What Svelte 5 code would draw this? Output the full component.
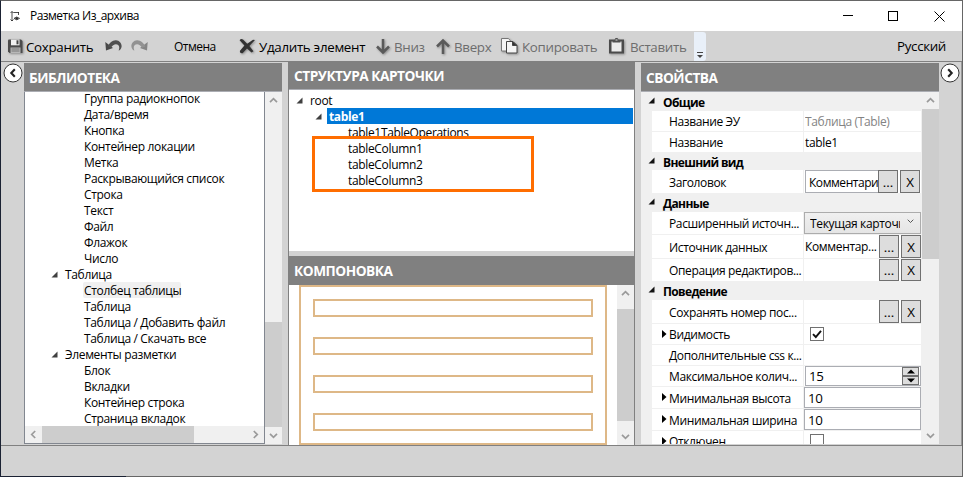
<script>
  const library = [
    { t: 'Группа радиокнопок' },
    { t: 'Дата/время' },
    { t: 'Кнопка' },
    { t: 'Контейнер локации' },
    { t: 'Метка' },
    { t: 'Раскрывающийся список' },
    { t: 'Строка' },
    { t: 'Текст' },
    { t: 'Файл' },
    { t: 'Флажок' },
    { t: 'Число' },
    { t: 'Таблица', group: true },
    { t: 'Столбец таблицы', picked: true },
    { t: 'Таблица' },
    { t: 'Таблица / Добавить файл' },
    { t: 'Таблица / Скачать все' },
    { t: 'Элементы разметки', group: true },
    { t: 'Блок' },
    { t: 'Вкладки' },
    { t: 'Контейнер строка' },
    { t: 'Страница вкладок' }
  ];
  const columns = ['table1TableOperations', 'tableColumn1', 'tableColumn2', 'tableColumn3'];
  const groups = [
    { name: 'Общие', h: 19, rows: [
      { n: 'Название ЭУ', h: 21, kind: 'muted', v: 'Таблица (Table)' },
      { n: 'Название', h: 21, kind: 'text', v: 'table1' }
    ] },
    { name: 'Внешний вид', h: 17, rows: [
      { n: 'Заголовок', h: 24, kind: 'boxed', v: 'Комментари' }
    ] },
    { name: 'Данные', h: 18, rows: [
      { n: 'Расширенный источн...', h: 23, kind: 'select', v: 'Текущая карточка' },
      { n: 'Источник данных', h: 24, kind: 'pick', v: 'Комментар...' },
      { n: 'Операция редактиров...', h: 23, kind: 'pick', v: '' }
    ] },
    { name: 'Поведение', h: 18, rows: [
      { n: 'Сохранять номер пос...', h: 24, kind: 'pick', v: '' },
      { n: 'Видимость', h: 21, kind: 'check', v: true, sub: true },
      { n: 'Дополнительные css к...', h: 21, kind: 'text', v: '' },
      { n: 'Максимальное колич...', h: 21, kind: 'spin', v: '15' },
      { n: 'Минимальная высота', h: 22, kind: 'input', v: '10', sub: true },
      { n: 'Минимальная ширина', h: 22, kind: 'input', v: '10', sub: true },
      { n: 'Отключен', h: 21, kind: 'check', v: false, sub: true }
    ] }
  ];
</script>

{#snippet chev(dir)}
  <svg class="chev" width="9" height="9" viewBox="0 0 9 9">
    <path
      d={{ up: 'M1 6.2 4.5 2.7 8 6.2', down: 'M1 2.8 4.5 6.3 8 2.8', left: 'M6.2 1 2.7 4.5 6.2 8', right: 'M2.8 1 6.3 4.5 2.8 8' }[dir]}
      fill="none" stroke="#9a9a9a" stroke-width="1.7" />
  </svg>
{/snippet}

{#snippet tri()}
  <svg class="tri" width="7" height="7" viewBox="0 0 7 7"><path d="M6.5.5v6h-6z" /></svg>
{/snippet}

<div class="window">
  <div class="title">
    <svg class="app" width="10" height="11" viewBox="0 0 10 11" fill="none" stroke="#222">
      <path d="M2 .5v9.500M.5 2 2 .5 3.500 2M.5 8.500 2 10l1.500-1.500M3.500 1.500h5.500M8.500 1v3" stroke-width=".8" />
      <path d="M4 7.400Q6.700 4.600 9.500 7.400 6.700 10.200 4 7.400z" stroke-width=".8" /><circle cx="6.700" cy="7.400" r="1.200" fill="#222" stroke="none" />
    </svg>
    <span class="name">Разметка Из_архива</span>
    <svg class="winbtns" width="102" height="11" viewBox="0 0 102 11" fill="none" stroke="#000">
      <path d="M0 4.500h10M91.500.5l10 10M101.500.5l-10 10" /><rect x="45.500" y=".5" width="9" height="9" />
    </svg>
  </div>

  <div class="toolbar">
    <svg class="save" width="17" height="17" viewBox="0 0 17 17">
      <path d="M1 2.500Q1 1.500 2 1.500H14l1.500 1.500v12H2.500L1 13.500z" fill="#4b4b4b" />
      <path d="M4 1.500h8.500v5.800H4z" fill="#f2f2f2" /><path d="M9.500 2.300h2v4h-2z" fill="#444" />
      <path d="M3.500 9.500h10V15h-10z" fill="#b8b8b8" /><path d="M4.500 11h8M4.500 13h8" stroke="#777" />
    </svg>
    <span class="big t-save">Сохранить</span>
    <svg class="undo" width="17" height="13" viewBox="0 0 17 13">
      <path d="M.3 3 1 11.600 8 9z" fill="#484848" /><path d="M2.600 7.600C4.500 3.200 7.500 1 11 1.200c4 .3 6.400 4 5.400 7.200-.4 1.500-1.400 2.600-2.800 3.200.8-2 1-4-.2-5.300-1.900-2-5.600-1-7.400 2.500z" fill="#505050" />
    </svg>
    <svg class="redo" width="17" height="13" viewBox="0 0 17 13">
      <path d="M16.700 3 16 11.600 9 9z" fill="#858585" /><path d="M14.400 7.600C12.500 3.200 9.500 1 6 1.200 2 1.500-.4 5.200.6 8.400c.4 1.500 1.400 2.600 2.800 3.200-.8-2-1-4 .2-5.300 1.900-2 5.600-1 7.400 2.500z" fill="#929292" />
    </svg>
    <span class="t-cancel">Отмена</span>
    <svg class="del" width="17" height="17" viewBox="0 0 17 17">
      <path d="M.6 2.200Q2 .2 4 1.600L8.200 5.800 14 1.800 16 2 10.400 8 14.500 13.300 12.500 14.600 8 10.400 3.600 15.200Q.8 15.800.8 13L5.400 7.600z" fill="#333" />
    </svg>
    <span class="big t-del">Удалить элемент</span>
    <svg class="down" width="16" height="17" viewBox="0 0 16 17"><path d="M8 1v13M2 8.500l6 6 6-6" fill="none" stroke="#5a5a5a" stroke-width="2.500" /></svg>
    <span class="big dim t-down">Вниз</span>
    <svg class="up" width="16" height="17" viewBox="0 0 16 17"><path d="M8 16V3M2 8.500l6-6 6 6" fill="none" stroke="#5a5a5a" stroke-width="2.500" /></svg>
    <span class="big dim t-up">Вверх</span>
    <svg class="copy" width="19" height="18" viewBox="0 0 19 18" stroke="#444" fill="#f4f4f4">
      <path d="M1.500 1.500h7l2.500 3v9.500H1.500z" stroke="#777" /><path d="M6.500 4.500H13l4 4v7.500H6.500z" /><path d="M12.500 4.500l4.500 4h-4.500z" fill="#333" />
    </svg>
    <span class="big dim t-copy">Копировать</span>
    <svg class="paste" width="17" height="18" viewBox="0 0 17 18">
      <path d="M1 2.500h15v14H1z" fill="#4b4b4b" /><path d="M3.500 4.500h10v10h-10z" fill="#ececec" /><path d="M4.500 5.500V3h2l1-2h2l1 2h2v2.500z" fill="#505050" /><path d="M7.500 2.500h2v1h-2z" fill="#ddd" />
    </svg>
    <span class="big dim t-paste">Вставить</span>
    <span class="grip"><svg width="6" height="7" viewBox="0 0 6 7"><path d="M0 .5h6" stroke="#444" /><path d="M0 3h6L3 6z" fill="#444" /></svg></span>
    <span class="lang">Русский</span>
  </div>

  <div class="main">
    <div class="rail">
      <svg width="20" height="20" viewBox="0 0 20 20"><circle cx="10" cy="10" r="9" fill="#fff" stroke="#333" /><path d="M11.800 6.300 8.300 10l3.500 3.700" fill="none" stroke="#222" stroke-width="2.100" /></svg>
    </div>

    <section class="lib">
      <h2>БИБЛИОТЕКА</h2>
      <div class="libbody">
        <div class="libleft">
          <div class="tree">
            {#each library as item}
              <div class="node" class:group={item.group}>
                {#if item.group}{@render tri()}{/if}
                <span class:picked={item.picked}>{item.t}</span>
              </div>
            {/each}
          </div>
          <div class="hscroll">
            <i>{@render chev('left')}</i><b></b><i class="end">{@render chev('right')}</i>
          </div>
        </div>
        <div class="vscroll"><i>{@render chev('up')}</i><b></b><i class="end">{@render chev('down')}</i></div>
      </div>
    </section>

    <section class="center">
      <h2>СТРУКТУРА КАРТОЧКИ</h2>
      <div class="structure">
        <div class="node root">{@render tri()}<span>root</span></div>
        <div class="node tbl">{@render tri()}<span class="selected">table1</span></div>
        {#each columns as c}<div class="node leaf"><span>{c}</span></div>{/each}
        <div class="marker"></div>
      </div>
      <h2 class="second">КОМПОНОВКА</h2>
      <div class="layout">
        <div class="frame"><div></div><div></div><div></div><div></div></div>
        <div class="vscroll"><i>{@render chev('up')}</i><b></b><i class="end">{@render chev('down')}</i></div>
      </div>
    </section>

    <section class="props">
      <h2>СВОЙСТВА</h2>
      <div class="propbody">
        <div class="grid">
          {#each groups as g}
            <div class="cat" style="height:{g.h}px">{@render tri()}<span>{g.name}</span></div>
            {#each g.rows as r}
              <div class="row" style="height:{r.h}px">
                <div class="key">
                  {#if r.sub}<svg class="sub" width="5" height="8" viewBox="0 0 5 8"><path d="M0 0 4.500 4 0 8z" /></svg>{/if}
                  <span>{r.n}</span>
                </div>
                <div class="val {r.kind}">
                  {#if r.kind === 'check'}
                    <span class="cb">{#if r.v}<svg width="12" height="12" viewBox="0 0 12 12"><path d="M2 6.200 4.800 9 10 2.800" fill="none" stroke="#111" stroke-width="1.900" /></svg>{/if}</span>
                  {:else if r.kind === 'select'}
                    <span class="selbox"><span class="clip">{r.v}</span><svg width="7" height="5" viewBox="0 0 7 5"><path d="M.7.7 3.500 3.500 6.300.7" fill="none" stroke="#555" /></svg></span>
                  {:else if r.kind === 'pick' || r.kind === 'boxed'}
                    <span class="v">{r.v}</span><button>...</button><button class="x">X</button>
                  {:else if r.kind === 'spin'}
                    <span class="field"><span>{r.v}</span><span class="spins"><i><svg width="8" height="5" viewBox="0 0 8 5"><path d="M0 4.500h8L4 .5z" /></svg></i><i><svg width="8" height="5" viewBox="0 0 8 5"><path d="M0 .5h8L4 4.500z" /></svg></i></span></span>
                  {:else if r.kind === 'input'}
                    <span class="field"><span>{r.v}</span></span>
                  {:else}
                    <span class="v">{r.v}</span>
                  {/if}
                </div>
              </div>
            {/each}
          {/each}
        </div>
        <div class="vscroll"><i>{@render chev('up')}</i><b></b><i class="end">{@render chev('down')}</i></div>
      </div>
    </section>

    <div class="rail right">
      <svg width="20" height="20" viewBox="0 0 20 20"><circle cx="10" cy="10" r="9" fill="#fff" stroke="#333" /><path d="M8.200 6.300 11.700 10l-3.500 3.700" fill="none" stroke="#222" stroke-width="2.100" /></svg>
    </div>
  </div>
  <div class="status"></div>
  <div class="edge"></div>
</div>

<style>
  .window, .window * { box-sizing: border-box; }
  .window {
    width: 963px; height: 477px; overflow: hidden; display: flex; flex-direction: column;
    background: #d3d3d3; border: 1px solid #666; border-left-color: #1b2233; border-bottom: 0;
    font: 12px/16px "Open Sans", "Noto Sans", sans-serif; letter-spacing: -0.34px; color: #000; white-space: nowrap;
  }
  svg { display: block; flex: none; }
  i { font-style: normal; }
  .title { height: 30px; background: #fff; display: flex; align-items: center; padding-left: 9px; flex: none; }
  .name { margin-left: 10px; letter-spacing: -0.53px; }
  .winbtns { margin-left: auto; margin-right: 17px; }
  .toolbar { height: 30px; display: flex; align-items: center; padding-left: 6px; flex: none; }
  .big { font-size: 13.33px; height: 17px; line-height: 19px; letter-spacing: -0.3px; }
  .dim { color: #6d6d6d; }
  .save, .del, .up, .down, .copy, .paste { filter: drop-shadow(1px 1px 1px #0005); }
  .t-save { width: 79px; margin-left: 2px; }
  .undo { margin-bottom: 2px; }
  .redo { margin-left: 9px; margin-bottom: 2px; }
  .t-cancel { margin-left: 26px; width: 65px; padding-top: 2px; letter-spacing: -0.5px; }
  .t-del { width: 116px; margin-left: 3px; }
  .t-down { width: 41px; margin-left: 3px; }
  .t-up { width: 46px; margin-left: 3px; }
  .t-copy { width: 86px; margin-left: 3px; }
  .t-paste { width: 64px; margin-left: 5px; }
  .grip { width: 12px; height: 29px; background: #e9f0f9; border-radius: 0 3px 3px 0; display: flex; align-items: flex-end; justify-content: center; padding-bottom: 2px; }
  .lang { margin-left: auto; margin-right: 16px; font-size: 13.33px; }

  .main { height: 385px; border-top: 1px solid #808080; border-bottom: 1px solid #808080; display: flex; flex: none; }
  .rail { width: 23px; padding: 1px 0 0 2px; }
  .rail.right { padding: 1px 0 0 1px; border-right: 1px solid #999; }
  h2 { margin: 0; height: 28px; background: #808080; color: #fff; font-size: 13.7px; font-weight: 700; line-height: 29px; padding-left: 5px; letter-spacing: -0.48px; flex: none; }

  .lib { width: 258px; display: flex; flex-direction: column; padding-top: 1px; margin-right: 6px; }
  .libbody { display: flex; height: 353px; border-top: 1px solid #abadb3; }
  .libleft { width: 241px; border: 1px solid #828790; border-top: 0; background: #fff; display: flex; flex-direction: column; }
  .tree { height: 334px; overflow: hidden; }
  .node { height: 16px; display: flex; align-items: center; padding-left: 59px; }
  .node span { height: 16px; line-height: 17.5px; }
  .tree .node:first-child { margin-top: -2px; }
  .tree .node.group { padding-left: 26px; }
  .node.group span { margin-left: 7px; }
  .picked { background: #f0f0f0; box-shadow: -1px 0 #f0f0f0; border-radius: 2px; }
  .hscroll { display: flex; height: 17px; background: #f0f0f0; }
  .hscroll i { width: 17px; display: grid; place-items: center; }
  .hscroll b { width: 152px; background: #cdcdcd; }
  .end { margin-left: auto; }
  .vscroll { width: 17px; background: #f0f0f0; display: flex; flex-direction: column; align-items: stretch; }
  .vscroll i { height: 17px; display: grid; place-items: center; }
  .vscroll b { background: #cdcdcd; }
  .vscroll .end { margin: auto 0 0; }
  .lib .vscroll b { height: 105px; margin-top: 213px; }
  .tri { fill: #404040; }

  .center { width: 347px; border-left: 1px solid #808080; border-right: 1px solid #808080; display: flex; flex-direction: column; margin-right: 6px; }
  .structure { height: 162px; background: #fff; border-top: 1px solid #abadb3; position: relative; padding-top: 2px; flex: none; }
  .center h2 { height: 27px; line-height: 28px; }
  .root { padding-left: 7px; }
  .root span { margin-left: 7px; }
  .tbl { padding-left: 26px; }
  .node .selected { margin-left: 5px; padding-left: 2px; flex: 1; line-height: 17px; margin-right: 1px; background: #0078d7; color: #fff; font-weight: 700; }
  .marker { position: absolute; left: 23px; top: 46px; width: 222px; height: 56px; border: 3px solid #ff6d00; }
  .center .second { height: 29px; margin-top: 5px; line-height: 30px; }
  .layout { height: 160px; background: #fff; display: flex; padding-left: 10px; justify-content: space-between; flex: none; }
  .frame { width: 308px; border: 2px solid #deb887; padding: 12px; display: flex; flex-direction: column; gap: 20px; }
  .frame div { height: 18px; border: 2px solid #deb887; flex: none; }
  .layout .vscroll b { height: 112px; margin-top: 7px; }

  .props { width: 298px; padding-top: 1px; }
  .propbody { display: flex; height: 353px; border-top: 1px solid #abadb3; background: #f0f0f0; }
  .grid { width: 281px; height: 352px; overflow: hidden; }
  .cat { display: flex; align-items: center; font-weight: 700; padding-left: 7px; letter-spacing: -0.65px; }
  .cat span { margin-left: 8px; padding-top: 2px; }
  .cat .tri { margin-bottom: 3px; fill: #111; }
  .row { margin: 0 1px 0 11px; display: flex; gap: 1px; border-bottom: 1px solid #f0f0f0; }
  .key { width: 151px; background: #fff; display: flex; align-items: center; padding: 2px 0 0 17px; position: relative; overflow: hidden; letter-spacing: -0.37px; }
  .sub { position: absolute; left: 10px; top: 6px; }
  .val { flex: 1; background: #fff; display: flex; align-items: center; padding-left: 1px; overflow: hidden; }
  .v { width: 74px; overflow: hidden; flex: none; line-height: 18px; }
  .muted { color: #838383; }
  .muted .v, .text .v { width: auto; padding-top: 1px; }
  button { width: 20px; height: 100%; padding: 0; border: 1px solid #707070; background: #ddd; font: 13.33px "Open Sans", sans-serif; line-height: 18px; margin-right: 2px; flex: none; }
  .boxed .v { width: 73px; height: 100%; border: 1px solid #abadb3; border-right: 0; padding-left: 3px; line-height: 23px; letter-spacing: -0.45px; }
  .check { padding-left: 6px; }
  .cb { width: 14px; height: 14px; border: 1px solid #707070; background: #fff; flex: none; }
  .select, .input { padding-left: 0; }
  .selbox { flex: 1; height: 100%; border: 1px solid #acacac; background: linear-gradient(#f0f0f0, #e5e5e5); display: flex; align-items: center; padding: 0 6px 0 5px; justify-content: space-between; }
  .selbox svg { margin-bottom: 3px; }
  .clip { width: 90px; overflow: hidden; padding-top: 1px; }
  .field { flex: 1; height: 100%; border: 1px solid #abadb3; display: flex; align-items: center; font-size: 13.33px; padding-left: 3px; }
  .spin { padding-left: 1px; }
  .spins { margin-left: auto; margin-right: 1px; display: flex; flex-direction: column; }
  .spins i { width: 17px; height: 9px; border: 1px solid #707070; background: #ddd; display: grid; place-items: center; }
  .props .vscroll b { height: 150px; }

  .status { height: 30px; }
  .edge { height: 1px; margin-left: -1px; background: linear-gradient(90deg, #1b2233 126px, #666 126px); }
</style>
